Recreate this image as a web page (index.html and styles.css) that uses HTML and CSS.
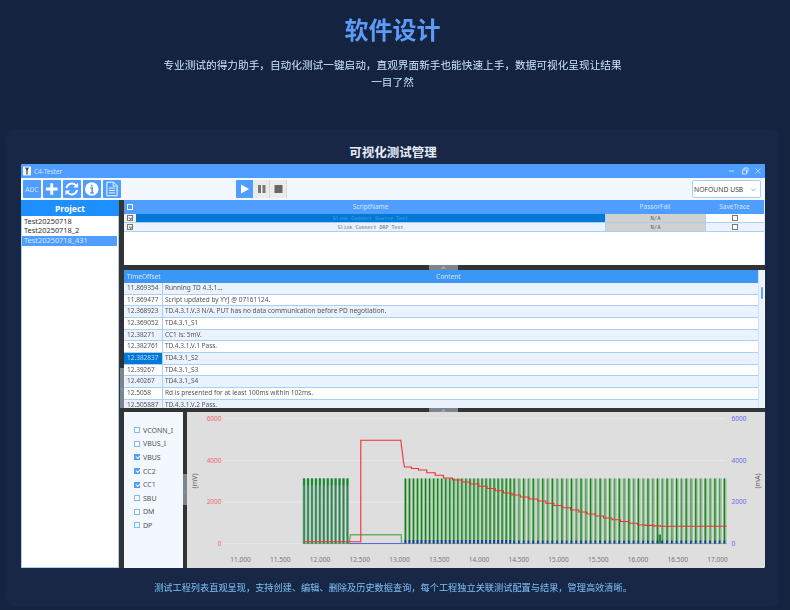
FILE: index.html
```html
<!DOCTYPE html>
<html lang="zh-CN">
<head>
<meta charset="utf-8">
<title>软件设计</title>
<link rel="stylesheet" href="styles.css">
</head>
<body>
<main class="page">
  <header class="hero">
    <h1 class="hero-title">软件设计</h1>
    <p class="hero-text">专业测试的得力助手，自动化测试一键启动，直观界面新手也能快速上手，数据可视化呈现让结果一目了然</p>
  </header>
  <section class="card">
    <h2 class="card-title">可视化测试管理</h2>
    <div class="app">
      <div class="titlebar">
        <svg class="app-logo" viewBox="0 0 9 10"><rect width="9" height="10" fill="#f4f4f4"/><path d="M3 1l1.5 3L6 1M4.5 4v5" stroke="#333" stroke-width="1.3" fill="none"/></svg>
        <span class="app-name">C4-Tester</span>
        <span class="winctl">
          <svg viewBox="0 0 8 8"><path d="M1 4h5" stroke="#cfe3ff"/></svg>
          <svg viewBox="0 0 8 8"><path d="M1.5 3h4v4h-4zM3 3V1h4v4H5.500" stroke="#cfe3ff" fill="none"/></svg>
          <svg viewBox="0 0 8 8"><path d="M1.500 1.500l5 5M6.500 1.500l-5 5" stroke="#cfe3ff" stroke-width=".8"/></svg>
        </span>
      </div>
      <div class="toolbar">
        <div class="tools">
          <span class="tool tool-text">ADC</span>
          <span class="tool"><svg viewBox="0 0 18 18"><path d="M9 3v12M3 9h12" stroke="#fff" stroke-width="3"/></svg></span>
          <span class="tool"><svg viewBox="0 0 18 18"><path d="M3.500 8a5.700 5.700 0 0 1 10-2.500M14.500 10a5.700 5.700 0 0 1-10 2.500" stroke="#fff" stroke-width="2" fill="none"/><path d="M15.500 2.500v5h-5zM2.500 15.500v-5h5z" fill="#fff"/></svg></span>
          <span class="tool"><svg viewBox="0 0 18 18"><circle cx="9" cy="9" r="7" fill="#fff"/><path d="M9 4.500v1.800M7.500 8h2v5M7.500 13h3.500" stroke="#4f9dff" stroke-width="1.700" fill="none"/></svg></span>
          <span class="tool"><svg viewBox="0 0 18 18"><path d="M4 2h7l3.500 3.500V16H4z" fill="none" stroke="#fff" stroke-width="1"/><path d="M6 8h6.500M6 10.500h6.500M6 13h6.500M10.500 2.500v3.500h3.500" stroke="#fff" stroke-width=".9" fill="none"/></svg></span>
        </div>
        <div class="player">
          <span class="pbtn pbtn-on"><svg viewBox="0 0 17 18"><path d="M5 4.500l8 4.500-8 4.500z" fill="#fff"/></svg></span>
          <span class="pbtn"><svg viewBox="0 0 17 18"><path d="M5 5h3v8H5zM9.500 5h3v8h-3z" fill="#777"/></svg></span>
          <span class="pbtn"><svg viewBox="0 0 17 18"><path d="M4.500 5h8v8h-8z" fill="#666"/></svg></span>
        </div>
        <div class="device"><span>NOFOUND USB</span><svg viewBox="0 0 8 8"><path d="M1.500 3l2.500 2.500L6.500 3" stroke="#6aa8f0" fill="none"/></svg></div>
      </div>
      <div class="workspace">
        <aside class="projects">
          <div class="projects-head">Project</div>
          <div class="project">Test20250718</div>
          <div class="project">Test20250718_2</div>
          <div class="project project-on">Test20250718_431</div>
        </aside>
        <div class="vsplit"><span class="vhandle"></span></div>
        <div class="panes">
          <div class="scripts">
            <div class="srow shead">
              <span class="c-check"><i class="box box-head"></i></span>
              <span class="c-name">ScriptName</span>
              <span class="c-pass">PassorFail</span>
              <span class="c-save">SaveTrace</span>
            </div>
            <div class="srow sbody sel">
              <span class="c-check"><i class="box box-tick"></i></span>
              <span class="c-name">Slink Connect Source Test</span>
              <span class="c-pass">N/A</span>
              <span class="c-save"><i class="box"></i></span>
            </div>
            <div class="srow sbody alt">
              <span class="c-check"><i class="box box-tick"></i></span>
              <span class="c-name">Slink Connect DRP Test</span>
              <span class="c-pass">N/A</span>
              <span class="c-save"><i class="box"></i></span>
            </div>
          </div>
          <div class="hsplit"><span class="hhandle"></span></div>
          <div class="log">
            <div class="log-table">
              <div class="lrow lhead"><span class="l-time">TimeOffset</span><span class="l-text l-center">Content</span></div>
              <div class="lrow alt"><span class="l-time">11.869354</span><span class="l-text">Running TD 4.3.1...</span></div>
              <div class="lrow"><span class="l-time">11.869477</span><span class="l-text">Script updated by YYJ @ 07161124.</span></div>
              <div class="lrow alt"><span class="l-time">12.368923</span><span class="l-text">TD.4.3.1.V.3 N/A. PUT has no data communication before PD negotiation.</span></div>
              <div class="lrow"><span class="l-time">12.369052</span><span class="l-text">TD4.3.1_S1</span></div>
              <div class="lrow alt"><span class="l-time">12.38271</span><span class="l-text">CC1 is: 5mV.</span></div>
              <div class="lrow"><span class="l-time">12.382761</span><span class="l-text">TD.4.3.1.V.1 Pass.</span></div>
              <div class="lrow alt"><span class="l-time l-sel">12.382837</span><span class="l-text">TD4.3.1_S2</span></div>
              <div class="lrow"><span class="l-time">12.39267</span><span class="l-text">TD4.3.1_S3</span></div>
              <div class="lrow alt"><span class="l-time">12.40267</span><span class="l-text">TD4.3.1_S4</span></div>
              <div class="lrow"><span class="l-time">12.5058</span><span class="l-text">Rd is presented for at least 100ms within 102ms.</span></div>
              <div class="lrow alt"><span class="l-time">12.505887</span><span class="l-text">TD.4.3.1.V.2 Pass.</span></div>
            </div>
            <div class="scrollbar"><span class="thumb"></span></div>
          </div>
          <div class="hsplit hsplit-thin"><span class="hhandle"></span></div>
          <div class="scope">
            <ul class="channels">
              <li class="channel"><i class="cbox"></i>VCONN_I</li>
              <li class="channel"><i class="cbox"></i>VBUS_I</li>
              <li class="channel"><i class="cbox cbox-on"></i>VBUS</li>
              <li class="channel"><i class="cbox cbox-on"></i>CC2</li>
              <li class="channel"><i class="cbox cbox-on"></i>CC1</li>
              <li class="channel"><i class="cbox"></i>SBU</li>
              <li class="channel"><i class="cbox"></i>DM</li>
              <li class="channel"><i class="cbox"></i>DP</li>
            </ul>
            <div class="vsplit vsplit-thin"><span class="vhandle vhandle-scope"></span></div>
            <div class="plot"><svg id="chart" class="chart" viewBox="187 412 577 155"></svg></div>
          </div>
        </div>
      </div>
    </div>
    <p class="caption">测试工程列表直观呈现，支持创建、编辑、删除及历史数据查询，每个工程独立关联测试配置与结果，管理高效清晰。</p>
  </section>
</main>
<script src="chart.js"></script>
</body>
</html>
```
FILE: styles.css
```css
* { box-sizing: border-box; }
html, body { margin: 0; height: 100%; }
body {
  background: #14233f;
  overflow: hidden;
  font-family: "Noto Sans", "Noto Sans CJK SC", sans-serif;
}
.page { padding: 0 11px 0 6px; }
.hero { text-align: center; padding-top: 12px; height: 130px; filter: blur(.25px); }
.hero-title { margin: 0; font-size: 24px; line-height: 34px; font-weight: 700; color: #5c9cf8; font-family: "Noto Sans CJK SC", sans-serif; }
.hero-text {
  margin: 10px auto 0;
  width: 462px;
  font-size: 10.67px;
  line-height: 17px;
  color: #cbe6ff;
  font-family: "Noto Sans CJK SC", sans-serif;
}
.card {
  background: #172745;
  border-radius: 8px;
  height: 476px;
  padding: 13px 14px 0 15px;
}
.card-title {
  margin: 0 0 3px;
  text-align: center;
  font-size: 12.5px;
  line-height: 18px;
  font-weight: 700;
  color: #e6edf8;
  font-family: "Noto Sans CJK SC", sans-serif;
}
.caption {
  margin: 12px 0 0;
  text-align: center;
  font-size: 9.2px;
  line-height: 14px;
  color: #7fc2f7;
  font-family: "Noto Sans CJK SC", sans-serif;
  filter: blur(.2px);
}
.app {
  height: 404px;
  background: #f3f8ff;
  border-radius: 2px;
  overflow: hidden;
  display: flex;
  flex-direction: column;
  filter: blur(.3px);
}
.titlebar {
  height: 14px;
  flex: none;
  background: #4f9dff;
  display: flex;
  align-items: center;
  padding: 0 3px 0 2px;
}
.app-logo { width: 8px; height: 10px; }
.app-name { margin-left: 3px; font-size: 6.5px; color: #cfe3ff; }
.winctl { margin-left: auto; display: flex; gap: 5px; }
.winctl svg { width: 8px; height: 8px; }
.toolbar {
  height: 22px;
  flex: none;
  display: flex;
  align-items: center;
  padding: 0 4px 0 2px;
  background: #f3f8ff;
}
.tools { display: flex; gap: 2.500px; width: 213px; }
.tool {
  width: 17.500px;
  height: 18px;
  background: #4f9dff;
  border-radius: 1px;
  display: flex;
  align-items: center;
  justify-content: center;
}
.tool svg { width: 17.500px; height: 18px; }
.tool-text { color: #d3e6ff; font-size: 6.500px; }
.player { display: flex; }
.pbtn { width: 17px; height: 18px; background: #ebebeb; border-right: 1px solid #d8d8d8; }
.pbtn svg { display: block; width: 17px; height: 18px; }
.pbtn-on { background: #4f9dff; border: 0; border-radius: 1px 0 0 1px; }
.device {
  margin-left: auto;
  width: 69px;
  height: 18px;
  background: #fff;
  border: 1px solid #a9cff8;
  border-radius: 2px;
  display: flex;
  align-items: center;
  justify-content: space-between;
  padding: 0 3px 0 1px;
  font-size: 6.800px;
  color: #444;
}
.device svg { width: 7px; height: 7px; }
.workspace { flex: 1; min-height: 0; display: flex; }
.projects {
  width: 98px;
  flex: none;
  background: #fff;
  border: 1px solid #a9cff8;
  border-top: 0;
  padding: 0;
}
.projects-head {
  height: 16px;
  margin: 0 -1px;
  background: #1e8fff;
  color: #fff;
  text-align: center;
  font-weight: 700;
  font-size: 8.500px;
  line-height: 17px;
}
.project {
  height: 9.700px;
  line-height: 9.700px;
  font-size: 7.400px;
  color: #333;
  padding-left: 2px;
  margin-right: 1px;
}
.project:nth-child(2) { margin-top: .500px; }
.project-on { background: #4f9dff; color: #d8e9ff; }
.vsplit { width: 5px; flex: none; background: #333; position: relative; }
.vsplit-thin { width: 4px; }
.vhandle { position: absolute; left: 1px; right: 0; top: 168px; height: 40px; background: #7f8489; }
.vhandle::after { content: ""; position: absolute; left: 1px; top: 50%; width: 2px; height: 2px; border-left: 1px solid #5f9fe8; border-bottom: 1px solid #5f9fe8; transform: rotate(45deg); }
.vhandle-scope { left: 0; top: 62px; height: 31px; }
.panes { flex: 1; min-width: 0; display: flex; flex-direction: column; }
.scripts { height: 65px; flex: none; background: #fff; border-right: 1px solid #dbe9fa; }
.srow { display: flex; }
.shead { height: 13.500px; background: #4f9dff; color: #d3e6ff; font-size: 6.500px; line-height: 13.500px; text-align: center; }
.sbody { height: 9px; font-size: 5px; line-height: 8.500px; text-align: center; color: #666; border-bottom: 1px solid #a9cff8; font-family: "DejaVu Sans Mono", monospace; }
.c-check { width: 12px; flex: none; display: flex; align-items: center; justify-content: center; background: #eef3fa; }
.shead .c-check { background: none; }
.c-name { width: 469px; flex: none; }
.c-pass { width: 100px; flex: none; }
.c-save { flex: 1; display: flex; align-items: center; justify-content: center; }
.sbody .c-pass { background: #d0d0d0; border-left: 1px solid #a9cff8; font-size: 5.500px; }
.sbody .c-save { border-left: 1px solid #a9cff8; }
.sel .c-name { background: #0078d7; color: #56a5e6; }
.alt .c-name, .alt .c-save { background: #e9f2fd; }
.box { display: block; width: 6px; height: 6px; border: 1px solid #777; background: #fff; }
.box-head { width: 6px; height: 6px; border-color: #fff; background: transparent; }
.box-tick { background: #f6f6f6; position: relative; }
.box-tick::after { content: ""; position: absolute; left: 1px; top: 0; width: 3px; height: 2px; border-left: 1px solid #777; border-bottom: 1px solid #777; transform: rotate(-45deg); }
.hsplit { height: 5px; flex: none; background: #333; position: relative; }
.hsplit-thin { height: 4px; }
.hhandle { position: absolute; left: 305px; width: 29px; top: 0; bottom: 0; background: #7f8489; }
.hhandle::after { content: ""; position: absolute; left: 13px; top: 1.500px; width: 2px; height: 2px; border-left: 1px solid #8fc0f5; border-top: 1px solid #8fc0f5; transform: rotate(45deg); }
.log { height: 138px; flex: none; display: flex; overflow: hidden; background: #fff; }
.log-table { flex: 1; min-width: 0; }
.lrow { height: 11.670px; display: flex; font-size: 6.500px; line-height: 10.600px; color: #555; border-bottom: 1px solid #a9cff8; }
.lrow.alt { background: #e9f2fd; }
.lhead { height: 13px; line-height: 13px; background: #3a97f5; color: #d3e6ff; border: 0; }
.l-time { width: 39px; flex: none; padding-left: 3px; border-right: 1px solid #a9cff8; }
.lhead .l-time { border: 0; }
.l-text { flex: 1; padding-left: 2px; white-space: nowrap; }
.l-center { text-align: center; padding-right: 26px; }
.l-sel { background: #0078d7; color: #bcdcff; }
.scrollbar { width: 7px; flex: none; background: #e9f2fd; border-left: 1px solid #cfe2f8; border-right: 1px solid #f7faff; padding: 17px 1.500px 0 1.500px; }
.thumb { display: block; height: 12px; background: #5ea5f8; border-radius: 1px; }
.scope { flex: 1; min-height: 0; display: flex; }
.channels { width: 59px; flex: none; margin: 0; list-style: none; padding: 11.500px 0 0 10px; background: #f3f8ff; }
.channel { display: flex; align-items: center; height: 13.600px; font-size: 7px; color: #555; gap: 3px; }
.cbox { width: 6px; height: 6px; border: 1px solid #7fb8fa; background: #fff; flex: none; }
.cbox-on { background: #4f9dff; border-color: #4f9dff; position: relative; }
.cbox-on::after { content: ""; position: absolute; left: .500px; top: 0; width: 3px; height: 2px; border-left: 1px solid #fff; border-bottom: 1px solid #fff; transform: rotate(-45deg); }
.plot { flex: 1; min-width: 0; background: #dedede; }
.chart { display: block; width: 100%; height: 155px; }
```
FILE: chart.js
```js
(function () {
  var svg = document.getElementById('chart');
  var NS = 'http://www.w3.org/2000/svg';
  function el(name, attrs, text) {
    var n = document.createElementNS(NS, name);
    for (var k in attrs) n.setAttribute(k, attrs[k]);
    if (text) n.textContent = text;
    svg.appendChild(n);
  }
  var FONT = '"Noto Sans", sans-serif';
  var Y0 = 543.7, TOP = 478.5, H = Y0 - TOP;
  [0, 2000, 4000, 6000].forEach(function (v) {
    var y = Y0 - v / 48;
    el('line', { x1: 223, x2: 725, y1: y, y2: y, stroke: '#e9e9e9', 'stroke-width': 1 });
    el('text', { x: 221, y: y + 2.4, 'text-anchor': 'end', fill: '#f26a6a', 'font-size': 6.5, 'font-family': FONT }, String(v));
    el('text', { x: 731, y: y + 2.4, fill: '#6a6af0', 'font-size': 6.5, 'font-family': FONT }, String(v));
  });
  el('text', { transform: 'translate(196.500 481) rotate(-90)', 'text-anchor': 'middle', fill: '#666', 'font-size': 7, 'font-family': FONT }, '(mV)');
  el('text', { transform: 'translate(759 481) rotate(-90)', 'text-anchor': 'middle', fill: '#666', 'font-size': 7, 'font-family': FONT }, '(mA)');
  for (var t = 0; t <= 12; t++) {
    el('text', { x: 240 + t * 39.75, y: 562, 'text-anchor': 'middle', fill: '#777', 'font-size': 6.5, 'font-family': FONT }, (11 + t / 2).toFixed(3));
  }
  // CC pulse train: a pale halo around a saturated core, plus the current pulse at the foot.
  function spikes(from, to, step, opts) {
    var i = 0;
    for (var x = from; x < to; x += step, i++) {
      el('rect', { x: x - 0.7, y: TOP, width: opts.halo, height: H, fill: opts.haloFill, opacity: opts.haloOpacity });
      el('rect', { x: x, y: TOP, width: opts.core, height: H, fill: opts.coreFill, opacity: (opts.fade && i % 2) ? 0.55 : 1 });
      if (opts.top) el('rect', { x: x, y: TOP, width: opts.core, height: 7, fill: '#12882a' });
      if (opts.pulse) el('rect', { x: x - 0.3, y: opts.pulse, width: 1.7, height: Y0 - opts.pulse, fill: '#2222d8' });
    }
  }
  spikes(302.8, 348.5, 3.94, { halo: 3, haloFill: '#7fb87f', haloOpacity: 0.8, core: 1.6, coreFill: '#2f7f63', top: true });
  spikes(404.3, 513, 4.03, { halo: 3.1, haloFill: '#6cae6c', haloOpacity: 0.65, core: 1.2, coreFill: '#0f821f', pulse: 540 });
  spikes(513, 726.5, 4.78, { halo: 3.4, haloFill: '#6cae6c', haloOpacity: 0.6, core: 1.2, coreFill: '#0f821f', fade: true, pulse: 540.500 });
  el('line', { x1: 303, x2: 726, y1: 543.6, y2: 543.6, stroke: '#3d8f45', 'stroke-width': 0.6 });
  el('line', { x1: 348, x2: 404, y1: 543.5, y2: 543.5, stroke: '#5a5af0', 'stroke-width': 0.9 });
  el('path', { d: 'M348.500 543.500L350 534.700H400.700L401 543.500', fill: 'none', stroke: '#6aae6a', 'stroke-width': 1.4 });
  el('rect', { x: 658, y: 534.500, width: 2.500, height: 9, fill: '#2e8a2e' });
  var pts = [[404, 467], [418, 470], [443, 478], [470, 484], [503, 493], [537, 501], [570, 510], [603, 518], [637, 525], [660, 526.300]];
  var d = 'M303 541.700H360.300V440.300H400.300L403 462L404 467';
  for (var i = 1; i < pts.length; i++) {
    var x0 = pts[i - 1][0], y0 = pts[i - 1][1], x1 = pts[i][0], y1 = pts[i][1];
    var n = Math.max(1, Math.round((x1 - x0) / 9));
    for (var j = 1; j <= n; j++) {
      d += 'H' + (x0 + (x1 - x0) * j / n).toFixed(1) + 'V' + (y0 + (y1 - y0) * j / n).toFixed(1);
    }
  }
  d += 'H726';
  el('path', { d: d, fill: 'none', stroke: '#f03030', 'stroke-width': 1.1 });
})();
```
